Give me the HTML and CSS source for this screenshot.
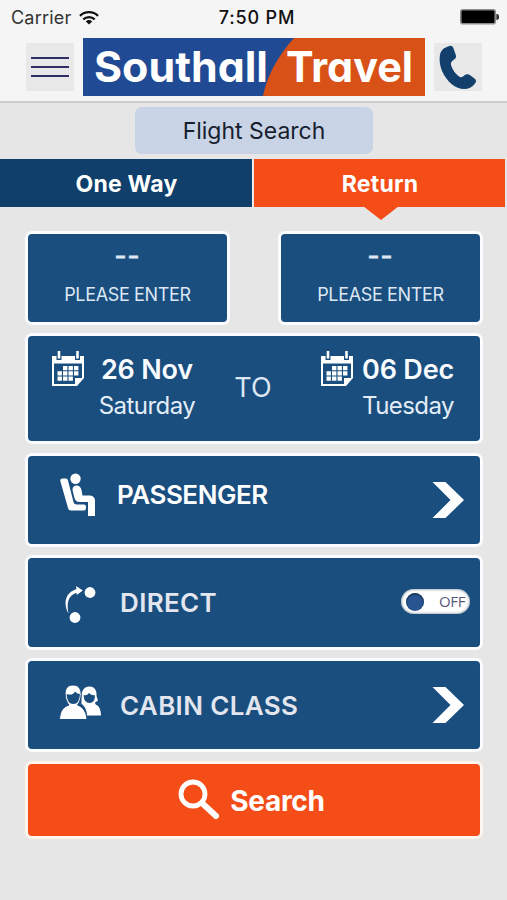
FILE: index.html
```html
<!DOCTYPE html>
<html lang="en">
<head>
<meta charset="utf-8">
<meta name="viewport" content="width=device-width, initial-scale=1">
<title>Southall Travel</title>
<link rel="stylesheet" href="styles.css">
</head>
<body>
<svg class="defs" aria-hidden="true">
  <symbol id="calendar" viewBox="0 0 34 36">
    <path fill="#fff" fill-rule="evenodd" d="M1 5h32v22l-7 8H1zM3 12.500v20.500h21v-6h7v-14.500z"/>
    <path fill="#1a4e7f" d="M5.500 2h5v7h-5zM24 2h5v7h-5z"/>
    <path fill="#fff" d="M6.700 0h2.600v7.500h-2.600zM25.200 0h2.600v7.500h-2.600z"/>
    <path fill="#fff" d="M12 15h4.400v4.200H12zM17.500 15h4.400v4.200h-4.400zM23 15h4.400v4.200H23zM6.500 20.300h4.400v4.200H6.500zM12 20.300h4.400v4.200H12zM17.500 20.300h4.400v4.200h-4.400zM23 20.300h4.400v4.200H23zM6.500 25.600h4.400v4.200H6.500zM12 25.600h4.400v4.200H12zM17.500 25.600h4.400v4.200h-4.400z"/>
  </symbol>
  <symbol id="chevron" viewBox="0 0 32 36">
    <path fill="#fff" d="M.5 0H13.500L32 18 13.500 36H.5L18.500 18z"/>
  </symbol>
</svg>

<header class="header">
  <div class="status">
    <div class="carrier">Carrier
      <svg class="wifi" viewBox="0 0 20 15" fill="none" stroke="#111" stroke-width="2.300">
        <path d="M1 5.800a13 13 0 0 1 18 0M4.300 9.300a8.300 8.300 0 0 1 11.400 0"/>
        <path fill="#111" stroke="none" d="M10 14.500 6.800 11.600a4.700 4.700 0 0 1 6.400 0z"/>
      </svg>
    </div>
    <div class="time">7:50 PM</div>
    <svg class="battery" viewBox="0 0 39 16">
      <rect x=".8" y=".8" width="34.400" height="14" rx="2" fill="#000" stroke="#8b8b8b" stroke-width="1.600"/>
      <path d="M36.300 5a3 3 0 0 1 0 6z" fill="#333"/>
    </svg>
  </div>
  <div class="brand">
    <button class="square" aria-label="Menu"><i></i><i></i><i></i></button>
    <svg class="logo" viewBox="0 0 342 58">
      <path fill="#204a94" d="M0 0h342v58H0z"/>
      <path fill="#d85218" d="M211 0h131v58H180Q186 28 211 0z"/>
      <text x="11" y="43.500" textLength="174" lengthAdjust="spacingAndGlyphs">Southall</text>
      <text x="203" y="43.500" textLength="127" lengthAdjust="spacingAndGlyphs">Travel</text>
    </svg>
    <button class="square phone" aria-label="Call">
      <svg viewBox="0 0 48 47"><path fill="#123f6c" d="M14 2.500C17 1 18.700 2 19.500 4.500L21.800 11C22.500 13.500 21.500 14.500 19.500 16C17.500 17.500 16.500 18.500 17 21C18.500 26 21.500 30 25 32.500C27 34 28.500 33 30.500 31.300C32.500 29.500 34.500 30 36.500 31.500L40.500 34.500C42.500 36 42.500 37.500 41 39.500C35.500 47 25.500 46.500 17.500 40C9.500 33 4.500 22 5.800 12C6.500 7 9 4 14 2.500z"/></svg>
    </button>
  </div>
</header>

<main>
  <h1 class="title"><span>Flight Search</span></h1>
  <nav class="tabs">
    <div class="tab">One Way</div>
    <div class="tab active">Return</div>
  </nav>

  <div class="form">
    <div class="places">
      <div class="card place"><span class="code">--</span><span class="hint">PLEASE ENTER</span></div>
      <div class="card place"><span class="code">--</span><span class="hint">PLEASE ENTER</span></div>
    </div>
    <div class="card dates">
      <svg class="cal"><use href="#calendar"/></svg>
      <div class="date"><b>26 Nov</b><span>Saturday</span></div>
      <div class="to">TO</div>
      <svg class="cal"><use href="#calendar"/></svg>
      <div class="date back"><b>06 Dec</b><span>Tuesday</span></div>
    </div>
    <div class="card row passenger">
      <svg class="icon" viewBox="0 0 44 44" fill="#fff">
        <circle cx="17.500" cy="5.700" r="5.200"/>
        <path d="M4.500 5.500H8Q9.500 5.500 10 7.500L15.500 29Q16 31.500 19 31.500H26Q28 31.500 28 34.500T26 37.500H13Q10.500 37.500 10 35L2.300 8Q2 5.500 4.500 5.500z"/>
        <path d="M14.500 17Q14.500 12.500 18.500 12.500T23.500 17L24.500 22.500H32Q37 23 37 28V43H30V29H21.500Q17.500 29 16.500 25z"/>
      </svg>
      <span class="label">PASSENGER</span>
      <svg class="chev"><use href="#chevron"/></svg>
    </div>
    <div class="card row direct">
      <svg class="icon" viewBox="0 0 44 44" fill="#fff">
        <circle cx="32" cy="10.500" r="5.400"/><circle cx="17" cy="35.500" r="5.400"/>
        <path d="M18 4 24.800 8.500 18.800 13 18.500 10.700C10 13.500 8.500 21 10.500 31.500C4.500 21 8 10 18.500 7.300z"/>
      </svg>
      <span class="label">DIRECT</span>
      <span class="switch"><i></i>OFF</span>
    </div>
    <div class="card row cabin">
      <svg class="icon" viewBox="0 0 44 44" fill="#fff">
        <path d="M23.500 16C23 9 26 4.500 31.500 4.500S39 9 38.500 14L40 19C36.500 19.500 36.500 22 38.500 23C41.500 24 43 29 43 33.500H29C29 28 26 23 23.500 22z"/>
        <path fill="#1a4e7f" d="M25.500 13Q29 14 31 11Q34 14 37 13Q37 21 31.500 21T25.500 13z"/>
        <path stroke="#1a4e7f" stroke-width="1" d="M1.500 37.500C2 29 5 25 11 23C6 17 4.500 3 15 3S24.500 17 19.500 23C25 25 28.500 30 29 37.500z"/>
        <path fill="#1a4e7f" d="M8.500 12Q15 14 17 9.500Q19 12 22 12Q21.500 22 15.300 22T8.500 12z"/>
      </svg>
      <span class="label">CABIN CLASS</span>
      <svg class="chev"><use href="#chevron"/></svg>
    </div>
    <button class="card search">
      <svg viewBox="0 0 42 42" fill="none" stroke="#fff"><circle cx="15" cy="15" r="12" stroke-width="4.800"/><path d="m24 24 14 13" stroke-width="6" stroke-linecap="round"/></svg>
      <span>Search</span>
    </button>
  </div>
</main>
</body>
</html>
```
FILE: styles.css
```css
* { box-sizing: border-box; }
body { margin: 0; height: 900px; overflow: hidden; background: #e6e6e6; font-family: Inter, sans-serif; color: #fff; }
button { border: 0; margin: 0; padding: 0; font: inherit; color: inherit; }
svg { display: block; flex: none; }
.defs { position: absolute; width: 0; height: 0; }

.header { height: 103px; background: #f5f5f5; border-bottom: 2px solid #cdcdcd; }
.status { height: 38px; padding: 0 8px 4px 11px; display: grid; grid-template-columns: 1fr auto 1fr; align-items: center; color: #111; font-size: 18px; }
.carrier { display: flex; align-items: center; gap: 8px; color: #333; letter-spacing: .2px; }
.wifi { width: 20px; height: 15px; }
.time { padding-left: 4px; font-weight: 500; letter-spacing: .8px; }
.battery { width: 39px; height: 16px; justify-self: end; }
.brand { display: flex; align-items: center; padding-left: 26px; }
.square { width: 48px; height: 48px; background: #e8e8e8; display: flex; flex-direction: column; justify-content: center; align-items: center; gap: 7px; }
.square i { width: 38px; height: 2px; background: #2f2f66; }
.logo { width: 342px; height: 58px; margin: 0 9px; }
.logo text { font: 700 42px Inter, sans-serif; font-feature-settings: "cv11" 1; fill: #fff; }
.phone svg { width: 48px; height: 47px; }

.title { margin: 0 0 5px; padding: 4px 0 0 135px; font-size: 23px; font-weight: 400; color: #17202f; }
.title span { display: block; width: 238px; height: 47px; line-height: 49px; border-radius: 7px; text-align: center; background: #c8d4e5; }
.tabs { display: grid; grid-template-columns: 253px 252px; height: 48px; text-align: center; font-size: 23px; font-weight: 700; line-height: 50px; letter-spacing: .2px; }
.tab { height: 48px; padding-left: 1px; background: #113f6b; border-right: 1px solid #f0f0f0; }
.active { position: relative; background: #f54d18; border: 0; margin-left: 1px; }
.active::after { content: ""; position: absolute; left: 109px; top: 47px; border: 18px solid transparent; border-top: 14px solid #f54d18; border-bottom: 0; }

.form { display: flex; flex-direction: column; gap: 8px; padding: 24px 24px 0 25px; }
.card { border: 3px solid #fafcff; border-radius: 7px; background: #1a4e7f; }
.places { display: flex; justify-content: space-between; }
.place { width: 205px; height: 94px; display: flex; flex-direction: column; align-items: center; color: #dce7f3; }
.code { font-size: 26px; line-height: 32px; margin-top: 6px; letter-spacing: 1px; -webkit-text-stroke: .8px #dce7f3; }
.hint { font-size: 18px; line-height: 24px; margin-top: 11px; letter-spacing: -.35px; }
.dates { height: 111px; display: flex; align-items: flex-start; padding: 15px 0 0 23px; }
.cal { width: 34px; height: 36px; }
.date { width: 124px; padding-top: 1px; text-align: center; font-size: 24px; letter-spacing: -.55px; color: #e3edf6; }
.date b, .date span { display: block; line-height: 36px; }
.date b { font-size: 27px; font-weight: 600; letter-spacing: -.2px; color: #f8fbff; }
.to { width: 88px; margin-right: 23px; padding-top: 19px; text-align: center; font-size: 27px; line-height: 36px; color: #dce7f3; }
.back { width: 108px; }
.row { height: 94px; display: flex; align-items: center; padding: 0 16px 0 30px; font-size: 26px; font-weight: 600; }
.icon { width: 44px; height: 44px; }
.label { margin-left: 18px; color: #e3e6ee; letter-spacing: .35px; }
.chev { width: 32px; height: 36px; margin-left: auto; }
.passenger { margin-top: 1px; }
.passenger .icon { margin-top: -10px; }
.passenger .label { margin: -12px 0 0 15px; color: #fff; letter-spacing: -.45px; }
.direct .icon { margin-top: 2px; }
.direct { height: 95px; padding-right: 10px; }
.switch { display: flex; align-items: center; justify-content: space-between; width: 69px; height: 25px; margin: -2px 0 0 auto; padding: 0 5px; border-radius: 13px; background: #fff; color: #555778; font: 15px/21px "Open Sans", sans-serif; letter-spacing: -.4px; box-shadow: inset 0 0 3px #567; }
.switch i { width: 18px; height: 18px; border-radius: 50%; background: #285591; box-shadow: inset 0 1px 2px #123; }
.cabin .icon { margin-top: -3px; }
.search { height: 78px; margin-top: 1px; background: #f54d18; border-color: #fff5ef; display: flex; align-items: center; justify-content: center; gap: 10px; padding: 2px 5px 0 0; font-size: 28px; font-weight: 700; letter-spacing: -.3px; }
.search svg { width: 42px; height: 42px; margin-top: -2px; }
```
